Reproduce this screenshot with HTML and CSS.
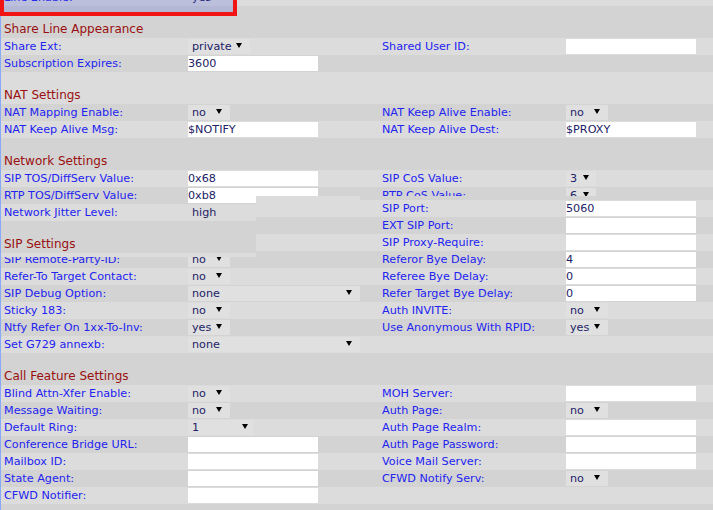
FILE: index.html
```html
<!DOCTYPE html>
<html>
<head>
<meta charset="utf-8">
<link rel="stylesheet" href="styles.css">
</head>
<body>
<div class="page">
  <div class="row light">
    <div class="lbl">Line Enable:</div>
    <div class="val"><span class="sel plain w42"><span class="st">yes</span></span></div>
    <div></div><div></div>
  </div>
  <div class="band dark"><div class="head">Share Line Appearance</div></div>
  <div class="row light">
    <div class="lbl">Share Ext:</div>
    <div class="val"><span class="sel w62"><span class="st">private</span><i class="arr"></i></span></div>
    <div class="lbl">Shared User ID:</div>
    <div class="val"><span class="inp"></span></div>
  </div>
  <div class="row dark">
    <div class="lbl">Subscription Expires:</div>
    <div class="val"><span class="inp">3600</span></div>
    <div></div><div></div>
  </div>
  <div class="band light"><div class="head">NAT Settings</div></div>
  <div class="row dark">
    <div class="lbl">NAT Mapping Enable:</div>
    <div class="val"><span class="sel w42"><span class="st">no</span><i class="arr"></i></span></div>
    <div class="lbl">NAT Keep Alive Enable:</div>
    <div class="val"><span class="sel w42"><span class="st">no</span><i class="arr"></i></span></div>
  </div>
  <div class="row light">
    <div class="lbl">NAT Keep Alive Msg:</div>
    <div class="val"><span class="inp">$NOTIFY</span></div>
    <div class="lbl">NAT Keep Alive Dest:</div>
    <div class="val"><span class="inp">$PROXY</span></div>
  </div>
  <div class="band dark"><div class="head">Network Settings</div></div>
  <div class="row light">
    <div class="lbl">SIP TOS/DiffServ Value:</div>
    <div class="val"><span class="inp">0x68</span></div>
    <div class="lbl">SIP CoS Value:</div>
    <div class="val"><span class="sel w30"><span class="st">3</span><i class="arr"></i></span></div>
  </div>
  <div class="row dark">
    <div class="lbl">RTP TOS/DiffServ Value:</div>
    <div class="val"><span class="inp">0xb8</span></div>
    <div class="lbl">RTP CoS Value:</div>
    <div class="val"><span class="sel w30"><span class="st">6</span><i class="arr"></i></span></div>
  </div>
  <div class="row light">
    <div class="lbl">Network Jitter Level:</div>
    <div class="val"><span class="sel plain w80"><span class="st">high</span></span></div>
    <div></div><div></div>
  </div>
  <div class="band short dark"><div class="head">SIP Settings</div></div>
  <div class="row dark">
    <div class="lbl">SIP Remote-Party-ID:</div>
    <div class="val"><span class="sel w42"><span class="st">no</span><i class="arr"></i></span></div>
    <div class="lbl">Referor Bye Delay:</div>
    <div class="val"><span class="inp">4</span></div>
  </div>
  <div class="row light">
    <div class="lbl">Refer-To Target Contact:</div>
    <div class="val"><span class="sel w42"><span class="st">no</span><i class="arr"></i></span></div>
    <div class="lbl">Referee Bye Delay:</div>
    <div class="val"><span class="inp">0</span></div>
  </div>
  <div class="row dark">
    <div class="lbl">SIP Debug Option:</div>
    <div class="val"><span class="sel w172"><span class="st">none</span><i class="arr"></i></span></div>
    <div class="lbl">Refer Target Bye Delay:</div>
    <div class="val"><span class="inp">0</span></div>
  </div>
  <div class="row light">
    <div class="lbl">Sticky 183:</div>
    <div class="val"><span class="sel w42"><span class="st">no</span><i class="arr"></i></span></div>
    <div class="lbl">Auth INVITE:</div>
    <div class="val"><span class="sel w42"><span class="st">no</span><i class="arr"></i></span></div>
  </div>
  <div class="row dark">
    <div class="lbl">Ntfy Refer On 1xx-To-Inv:</div>
    <div class="val"><span class="sel w42"><span class="st">yes</span><i class="arr"></i></span></div>
    <div class="lbl">Use Anonymous With RPID:</div>
    <div class="val"><span class="sel w42"><span class="st">yes</span><i class="arr"></i></span></div>
  </div>
  <div class="row light">
    <div class="lbl">Set G729 annexb:</div>
    <div class="val"><span class="sel w172"><span class="st">none</span><i class="arr"></i></span></div>
    <div></div><div></div>
  </div>
  <div class="band dark"><div class="head">Call Feature Settings</div></div>
  <div class="row light">
    <div class="lbl">Blind Attn-Xfer Enable:</div>
    <div class="val"><span class="sel w42"><span class="st">no</span><i class="arr"></i></span></div>
    <div class="lbl">MOH Server:</div>
    <div class="val"><span class="inp"></span></div>
  </div>
  <div class="row dark">
    <div class="lbl">Message Waiting:</div>
    <div class="val"><span class="sel w42"><span class="st">no</span><i class="arr"></i></span></div>
    <div class="lbl">Auth Page:</div>
    <div class="val"><span class="sel w42"><span class="st">no</span><i class="arr"></i></span></div>
  </div>
  <div class="row light">
    <div class="lbl">Default Ring:</div>
    <div class="val"><span class="sel w65"><span class="st">1</span><i class="arr"></i></span></div>
    <div class="lbl">Auth Page Realm:</div>
    <div class="val"><span class="inp"></span></div>
  </div>
  <div class="row dark">
    <div class="lbl">Conference Bridge URL:</div>
    <div class="val"><span class="inp"></span></div>
    <div class="lbl">Auth Page Password:</div>
    <div class="val"><span class="inp"></span></div>
  </div>
  <div class="row light">
    <div class="lbl">Mailbox ID:</div>
    <div class="val"><span class="inp"></span></div>
    <div class="lbl">Voice Mail Server:</div>
    <div class="val"><span class="inp"></span></div>
  </div>
  <div class="row dark">
    <div class="lbl">State Agent:</div>
    <div class="val"><span class="inp"></span></div>
    <div class="lbl">CFWD Notify Serv:</div>
    <div class="val"><span class="sel w42"><span class="st">no</span><i class="arr"></i></span></div>
  </div>
  <div class="row light">
    <div class="lbl">CFWD Notifier:</div>
    <div class="val"><span class="inp"></span></div>
    <div></div><div></div>
  </div>
  <div class="row dark"><div></div><div></div><div></div><div></div></div>

  <div class="glitch">
    <div class="strip"></div>
    <div class="grow light">
      <div></div>
      <div class="lbl">SIP Port:</div>
      <div class="val"><span class="inp">5060</span></div>
    </div>
    <div class="grow dark">
      <div></div>
      <div class="lbl">EXT SIP Port:</div>
      <div class="val"><span class="inp"></span></div>
    </div>
    <div class="grow light">
      <div></div>
      <div class="lbl">SIP Proxy-Require:</div>
      <div class="val"><span class="inp"></span></div>
    </div>
  </div>
  <div class="seam"></div>

  <div class="mark"></div>
</div>
</body>
</html>
```

FILE: styles.css
```css
html, body {
  margin: 0;
  padding: 0;
  background: #d3d3d3;
}
body {
  width: 713px;
  height: 510px;
  overflow: hidden;
  font-family: "DejaVu Sans", Verdana, sans-serif;
  font-size: 11.2px;
}
.page {
  position: relative;
  margin-top: -11px;
  border-left: 1px solid #86a8ff;
}
.light { background: #dcdcdc; }
.dark { background: #d3d3d3; }
.row {
  display: grid;
  grid-template-columns: 187px 191px 187px 1fr;
  height: 17px;
  line-height: 17.6px;
}
.band {
  height: 32px;
  display: flex;
  align-items: flex-end;
  padding-left: 3px;
}
.band.short { height: 30px; }
.head {
  color: #991010;
  font-size: 12px;
  line-height: 15px;
  padding-bottom: 1.5px;
}
.band.short .head { padding-bottom: 0; line-height: 14px; }
.lbl {
  color: #2323f0;
  padding-left: 3px;
  white-space: nowrap;
}
.val {
  display: flex;
  align-items: center;
  height: 100%;
}
.inp {
  display: block;
  width: 130px;
  height: 15px;
  background: #fff;
  color: #222266;
  line-height: 16.6px;
  white-space: nowrap;
  overflow: hidden;
}
.sel {
  position: relative;
  display: block;
  height: 15px;
  background: #e0e0e0;
  color: #222266;
  line-height: 16.6px;
  white-space: nowrap;
}
.sel.plain { background: transparent; }
.st { padding-left: 4px; }
.w30 { width: 30px; }
.w42 { width: 42px; }
.w62 { width: 62px; }
.w65 { width: 65px; }
.w80 { width: 80px; }
.w172 { width: 172px; }
.arr {
  position: absolute;
  right: 8px;
  top: 4px;
  width: 0;
  height: 0;
  border-left: 3px solid transparent;
  border-right: 3px solid transparent;
  border-top: 5px solid #000;
}
.w30 .arr { right: 7px; }
.w65 .arr { right: 5px; }
.glitch {
  position: absolute;
  left: 255px;
  top: 207px;
  width: 458px;
  height: 55px;
  overflow: hidden;
}
.strip {
  height: 4px;
  background: linear-gradient(to right, #dcdcdc 0 104px, #d3d3d3 104px);
}
.grow {
  display: grid;
  grid-template-columns: 123px 187px 1fr;
  height: 17px;
  line-height: 17.6px;
}
.seam {
  position: absolute;
  left: 0;
  top: 262px;
  width: 255px;
  height: 6px;
  background: linear-gradient(to bottom, #d3d3d3 0 2px, #dcdcdc 2px);
}
.mark {
  position: absolute;
  left: -1px;
  top: 0;
  width: 229px;
  height: 23px;
  border: 4px solid #f21414;
  border-top-width: 0;
  background: rgba(60, 75, 220, 0.2);
}
```
